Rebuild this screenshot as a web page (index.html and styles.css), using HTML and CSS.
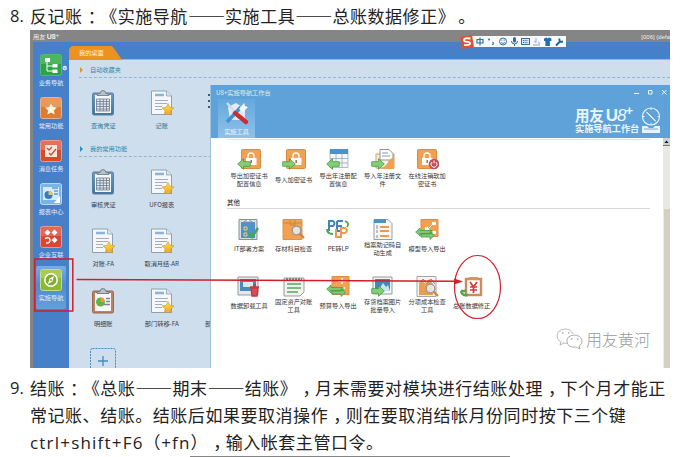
FILE: index.html
```html
<!DOCTYPE html>
<html lang="zh-CN">
<head>
<meta charset="utf-8">
<title>U8+ 结账</title>
<link rel="stylesheet" href="styles.css">
</head>
<body>
<svg class="defs" width="0" height="0" aria-hidden="true">
  <defs>
    <linearGradient id="gBlue" x1="0" y1="0" x2="0" y2="1"><stop offset="0" stop-color="#6f9dbb"/><stop offset="1" stop-color="#3f749e"/></linearGradient>
    <linearGradient id="gStar" x1="0" y1="0" x2="0" y2="1"><stop offset="0" stop-color="#ffe45a"/><stop offset="1" stop-color="#eda317"/></linearGradient>
  </defs>
  <symbol id="clip" viewBox="0 0 24 26">
    <rect x="1.500" y="3" width="21" height="22" rx="1.500" fill="url(#gBlue)" stroke="#587f9b"/>
    <path d="M4 5h16v18H4z" fill="#f4f7fa"/>
    <path d="M6 5.500V4l3-.5q.5-3 3-3t3 3l3 .5v1.500z" fill="#b9c1c9" stroke="#67737f" stroke-width=".8"/>
    <path d="M5.500 9h13v12h-13zM5.500 11.500h13M5.500 14h13M5.500 16.500h13M5.500 19h13M9 9v12M12.300 9v12M15.500 9v12" fill="#e5e9f0" stroke="#697889" stroke-width=".8"/>
  </symbol>
  <symbol id="doc" viewBox="0 0 24 26">
    <path d="M1.500 1h15l5 5v18.500h-20z" fill="#f4f7fb" stroke="#8797a8" stroke-width=".9"/>
    <path d="M16.500 1v5h5" fill="#dbe4ed" stroke="#8797a8" stroke-width=".7"/>
    <path d="M5 5h9" stroke="#8ab3dd" stroke-width="2.500"/>
    <path d="M5 10.500h13M5 13.500h12M5 16.500h7M5 19.500h7" stroke="#a5adb8" stroke-width="1.200"/>
    <path d="M18 13.500l1.800 3.800 4.200.6-3.100 2.900.8 4.200-3.700-2-3.700 2 .8-4.200-3.100-2.900 4.200-.6z" fill="url(#gStar)" stroke="#d49420" stroke-width=".6"/>
  </symbol>
  <symbol id="clipChart" viewBox="0 0 24 26">
    <rect x="1.500" y="3" width="21" height="22" rx="1.500" fill="#bd8260" stroke="#996a50"/>
    <path d="M4 5h16v18H4z" fill="#f6f8fa"/>
    <path d="M6 5.500V4l3-.5q.5-3 3-3t3 3l3 .5v1.500z" fill="#b9c1c9" stroke="#606a72" stroke-width=".8"/>
    <circle cx="9.500" cy="14" r="4.500" fill="#59b747"/><path d="M9.500 14V9.500a4.500 4.500 0 0 1 4.500 4.500z" fill="#ee9a3a"/>
    <path d="M15 10.500h4M15 13.500h4M13 16.500h6" stroke="#7d858e" stroke-width="1.300"/>
  </symbol>
  <symbol id="lock" viewBox="0 0 20 20">
    <rect x=".5" y=".5" width="19" height="19" rx="1" fill="#f2a052" stroke="#dc8a3c"/>
    <path d="M7 9V7a3 3 0 0 1 6 0v2" fill="none" stroke="#fff" stroke-width="1.400"/>
    <path d="M5 9h10.500v7H5z" fill="#fff"/><path d="M10.200 11v3" stroke="#96662f" stroke-width="1.400"/>
  </symbol>
  <symbol id="left" viewBox="0 0 14 12"><path d="M.7 6l5.800-5.300v3h6.800v4.600H6.500v3z" fill="#83cf77" stroke="#469c42" stroke-width=".8"/></symbol>
  <symbol id="right" viewBox="0 0 14 12"><path d="M13.300 6L7.500.7v3H.7v4.600h6.800v3z" fill="#83cf77" stroke="#469c42" stroke-width=".8"/></symbol>
  <symbol id="swap" viewBox="0 0 20 13"><path d="M.7 5L5 1v2.500h12v3H5V9zM19.300 8.500l-4.300-4V7H6v3h9v2.500z" fill="#81c875" stroke="#469a42" stroke-width=".8"/></symbol>
  <symbol id="lens" viewBox="0 0 14 14"><path d="M8.500 8.500l4.500 4.500" stroke="#d77d36" stroke-width="2.200"/><circle cx="5.500" cy="5.500" r="4.300" fill="#e8f2f8" fill-opacity=".8" stroke="#8f98a1" stroke-width="1.300"/></symbol>
</svg>

<ol class="steps" start="8">
  <li class="step">
    <span class="num">8.</span>
    <p class="txt">反记账<span class="mid">：</span>《实施导航<span class="dash">——</span>实施工具<span class="dash">——</span>总账数据修正》<span class="stop">。</span></p>
  </li>
</ol>

<div class="shot">
  <header class="topbar"><span class="brand">用友 <b>U8</b><sup>+</sup></span><span class="user">[006] (defa</span></header>
  <div class="desk">
    <nav class="side">
      <div class="nav"><svg class="nicon" viewBox="0 0 22 22"><rect x=".5" y=".5" width="21" height="21" rx="2" fill="#2da345" stroke="#55b970"/><path d="M1 1h20v9H1z" fill="#5fc36e" opacity=".6"/><path d="M5 4h5v4H5zM12.500 10h5v3.500h-5zM12.500 15.500h5V19h-5z" fill="#fff"/><path d="M7 8v9h6M7 12h6" fill="none" stroke="#fff"/></svg><span>业务导航</span></div>
      <div class="nav"><svg class="nicon" viewBox="0 0 22 22"><rect x=".5" y=".5" width="21" height="21" rx="2" fill="#dd7c33" stroke="#e9b287"/><path d="M1 1h20v9H1z" fill="#f1ae7a" opacity=".6"/><path d="M11 6.500l1.800 3.500 4 .6-2.900 2.800.7 4-3.600-2-3.600 2 .7-4-2.900-2.800 4-.6z" fill="#fff5dd"/></svg><span>常用功能</span></div>
      <div class="nav"><svg class="nicon" viewBox="0 0 22 22"><rect x=".5" y=".5" width="21" height="21" rx="2" fill="#d94a2d" stroke="#e99b88"/><path d="M1 1h20v9H1z" fill="#ef8b77" opacity=".6"/><path d="M5 5h12v12H5z" fill="#fce6de"/><path d="M7 8l2 2 3-3M9 13l2 2 5-6" fill="none" stroke="#cf4b34" stroke-width="1.300"/></svg><span>消息任务</span></div>
      <div class="nav"><svg class="nicon" viewBox="0 0 22 22"><rect x=".5" y=".5" width="21" height="21" rx="2" fill="#76b5e6" stroke="#b6daf1"/><path d="M3 4h16v13H3z" fill="#d5eafa"/><circle cx="8.500" cy="12" r="4" fill="#3779c6"/><path d="M8.500 12V8a4 4 0 0 1 4 4z" fill="#e7ca48"/><path d="M12 5h6M14 8h4M14 11h4" stroke="#5d9bd2" stroke-width="1.300"/><path d="M14 20l6-7v7z" fill="#fff"/></svg><span>报表中心</span></div>
      <div class="nav"><svg class="nicon" viewBox="0 0 22 22"><rect x=".5" y=".5" width="21" height="21" rx="2" fill="#dc4534" stroke="#ec998c"/><path d="M1 1h20v9H1z" fill="#ef8577" opacity=".5"/><path d="M7.500 3.500l3 3-3 3-3-3zM14.500 3.500l3 3-3 3-3-3zM14.500 11l3 3-3 3-3-3z" fill="#fff"/><path d="M5 12.500q5-2 5 1.500t-4 3" fill="none" stroke="#fff" stroke-width="1.500"/></svg><span>企业互联</span></div>
      <div class="nav on"><svg class="nicon" viewBox="0 0 22 22"><rect x=".5" y=".5" width="21" height="21" rx="2" fill="#8cb92d" stroke="#c5dc86"/><path d="M1 1h20v8H1z" fill="#bdd675" opacity=".6"/><circle cx="11" cy="11" r="6.200" fill="#82aa2e" stroke="#fff" stroke-width="1.500"/><path d="M14 7l-1.500 5.500L8 15l1.500-5.500z" fill="#fff"/><circle cx="11" cy="11" r="1" fill="#7da52f"/></svg><span>实施导航</span></div>
    </nav>
    <main class="main">
      <div class="tabs"><span class="tab">我的桌面</span></div>
      <div class="board">
        <h2 class="sec first">自动收藏夹</h2>
        <div class="row"><div class="app teal"><svg><use href="#clip"/></svg>查询凭证</div><div class="app teal"><svg><use href="#doc"/></svg>记账</div><div class="app"><svg viewBox="0 0 24 26"><path d="M0 5h2M0 11h2M0 17h2" stroke="#42586c" stroke-width="2"/></svg></div></div>
        <h2 class="sec">我的常用功能</h2>
        <div class="row"><div class="app"><svg><use href="#clip"/></svg>审核凭证</div><div class="app"><svg><use href="#doc"/></svg>UFO报表</div></div>
        <div class="row"><div class="app"><svg><use href="#doc"/></svg>对账-FA</div><div class="app"><svg><use href="#doc"/></svg>取消月结-AR</div></div>
        <div class="row"><div class="app"><svg><use href="#clipChart"/></svg>明细账</div><div class="app"><svg><use href="#doc"/></svg>部门转移-FA</div><div class="app cut">部</div></div>
        <div class="row"><div class="app"><svg class="add" viewBox="0 0 26 26"><rect x=".5" y=".5" width="25" height="25" rx="2" fill="none" stroke="#4b8ab9" stroke-dasharray="2 1"/><path d="M13 8v10M8 13h10" stroke="#438abf" stroke-width="1.300"/></svg></div></div>
      </div>
    </main>
  </div>

  <div class="ime">
    <svg viewBox="0 0 106 16">
      <path d="M12 2h94v11H12z" fill="#f7fafc"/>
      <path d="M0 3l12-2 2 12-12 2z" fill="#df5230"/>
      <path d="M10.500 4.500Q4 3.500 4 6.200q0 1.300 3.500 1.600 3.500.4 2.500 2.300-1 1.500-6 .8" fill="none" stroke="#fff" stroke-width="1.800"/>
      <path d="M17 5.500h6v3.500h-6zM20 3.500v8" fill="none" stroke="#32719c" stroke-width="1.200"/>
      <circle cx="29" cy="5.500" r="1" fill="#32719c"/><path d="M32.500 8.500q1.500 0 0 2.500" fill="none" stroke="#32719c" stroke-width="1.300"/>
      <circle cx="43" cy="7.500" r="3.500" fill="none" stroke="#32719c"/><path d="M41 8.500q2 2 4 0M41.800 5.500v1.200M44.200 5.500v1.200" fill="none" stroke="#32719c" stroke-width=".9"/>
      <rect x="53" y="3" width="3" height="5.500" rx="1.500" fill="#256da2"/><path d="M51.500 7q0 3 3 3t3-3M54.500 10v2" fill="none" stroke="#256da2"/>
      <rect x="61.500" y="4.500" width="8" height="6" fill="#d9e6ef" stroke="#32719c"/><path d="M63 6.500h5M63 8.500h5" stroke="#32719c" stroke-dasharray="1 .7"/>
      <path d="M76 4v4M74 7l2 1.500M73 11h7M78 8l2 2" fill="none" stroke="#b5c2cc" stroke-width="1.400"/>
      <path d="M84 4.500l2.500-1 1.200 1 1.200-1 2.500 1v2.500h-1.500v5h-4.500V7H84z" fill="#226eaa"/>
      <path d="M96 11.500l4-4M99.500 4.500q-1 4 3.500 3" fill="none" stroke="#255f91" stroke-width="1.900"/>
    </svg>
  </div>

  <section class="win">
    <header class="whead">
      <div class="wleft">
        <div class="wtitle">U8+实施导航工作台</div>
        <div class="wtab"><svg viewBox="0 0 24 24"><path d="M3 6l8-4 9 6v11H5z" fill="#e3eaf1"/><path d="M2 2l9 10" stroke="#d5dce5" stroke-width="2.500"/><path d="M2 21l14-15" stroke="#3f91d6" stroke-width="3.600"/><path d="M14 8l5-6 1 3 3 1-5 5z" fill="#f6fafc"/><path d="M10 12l11 9" stroke="#cb2d36" stroke-width="4.300" stroke-linecap="round"/></svg><span>实施工具</span></div>
      </div>
      <div class="wright">
        <svg class="ctl" viewBox="0 0 36 8"><path d="M1 5.500h5M15.500 2.500h3.500v3.500h-3.500zM29 2l4.500 4.500M33.500 2L29 6.500" fill="none" stroke="#eef7fc"/></svg>
        <div class="logo">
          <div><div class="l1">用友 <b>U<i>8</i></b><sup>+</sup></div><div class="l2">实施导航工作台</div></div>
          <svg viewBox="0 0 20 28"><circle cx="10" cy="10.500" r="8.500" fill="none" stroke="#e5f3fb" stroke-width="1.200"/><path d="M10 2v2M10 17v2M1.500 10.500h2M16.500 10.500h2M5.500 6L9 9l5.500 6-3.500-3z" stroke="#e5f3fb" fill="#e5f3fb"/><path d="M1 20h5l2 2h4l2-2h5v7H1z" fill="#e5f3fb"/><path d="M3 23h14" stroke="#6faeda"/></svg>
        </div>
      </div>
    </header>
    <div class="wbody">
      <div class="pane">
        <div class="tools r1">
          <div class="tool"><svg viewBox="0 0 24 21"><use href="#lock" x="4" width="20" height="20"/><use href="#left" y="9" width="14" height="12"/></svg><span>导出加密证书<br>配置信息</span></div>
          <div class="tool"><svg viewBox="0 0 24 21"><use href="#lock" x="4" width="20" height="20"/><use href="#right" y="9" width="14" height="12"/></svg><span>导入加密证书</span></div>
          <div class="tool"><svg viewBox="0 0 24 21"><path d="M4 .5h18v18H4zM4 9.500h18M4 14h18M10 5v13M16 5v13" fill="#f4f6f7" stroke="#9faab2" stroke-width=".8"/><path d="M4 0h18v5H4z" fill="#4b94cb"/><use href="#left" y="9" width="14" height="12"/></svg><span>导出年注册配<br>置信息</span></div>
          <div class="tool"><svg viewBox="0 0 24 21"><path d="M5 5h18v14H5z" fill="#f7f2e9" stroke="#d59961"/><path d="M9 .5h9l4 4V11H9z" fill="#fff" stroke="#89929a"/><path d="M11 4h6M11 7h8" stroke="#829bac"/><path d="M23 8v12H9q7-3 9-9z" fill="#f2a052"/><use href="#right" y="9" width="14" height="12"/></svg><span>导入年注册文<br>件</span></div>
          <div class="tool"><svg viewBox="0 0 24 21"><use href="#lock" x="2" width="20" height="20"/><circle cx="19" cy="15" r="5.300" fill="#c64c5a"/><path d="M17 13a3 3 0 1 0 4 0M19 11.500v3" fill="none" stroke="#fff"/></svg><span>在线注销软加<br>密证书</span></div>
        </div>
        <h3>其他</h3>
        <div class="tools r2">
          <div class="tool"><svg viewBox="0 0 24 21"><path d="M2 .5h18v20H2z" fill="#d5dee3" stroke="#879197"/><path d="M4 3h14v16H4z" fill="#4d92cc"/><path d="M7 3l4-3 4 3z" fill="#fff" stroke="#81909b"/><path d="M7 8h3v3H7zM7 14h3v3H7z" fill="none" stroke="#f4d264"/><path d="M11 14l4 4 6-9" fill="none" stroke="#48a651" stroke-width="2.600"/></svg><span>IT部署方案</span></div>
          <div class="tool"><svg viewBox="0 0 24 21"><path d="M1 .5h19v20H1z" fill="#f2a052" stroke="#de914d"/><path d="M1 4h19M8 1v5h5V1" fill="none" stroke="#ce843f"/><use href="#lens" x="9" y="6" width="14" height="14"/></svg><span>存材科目检查</span></div>
          <div class="tool"><svg viewBox="0 0 24 21"><path d="M3 12V2h4q3 2 0 5H3M11 2h6M11 7h5M11 2v10h3" fill="none" stroke="#3f86c0" stroke-width="2"/><path d="M10 10v8h4M15 19V9h4q4 2 0 5h-4" fill="none" stroke="#ee9b50" stroke-width="2"/><path d="M19 2q5 2 2 6M1 10q0 5 6 5" fill="none" stroke="#4ca64e" stroke-width="1.800"/></svg><span>PE转LP</span></div>
          <div class="tool"><svg viewBox="0 0 24 21"><path d="M3 .5h14l4 4v16H3z" fill="#f7f7f7" stroke="#989da1"/><path d="M3 0h12v4H3z" fill="#4e91c3"/><path d="M9 8h9M9 12h9M9 17h9" stroke="#e99a56" stroke-width="1.800"/><path d="M6 6v4M6 11v3M6 16v3" stroke="#888"/></svg><span>档案助记码自<br>动生成</span></div>
          <div class="tool"><svg viewBox="0 0 24 21"><path d="M6 .5h17v17H6z" fill="#f2a052" stroke="#d88e4a"/><path d="M10 8h3v4h-3zM17 3h4v3h-4zM17 12h4v3h-4z" fill="#fff"/><path d="M13 10l5-5M13 10l5 4" stroke="#fff"/><use href="#swap" y="8" width="20" height="13"/></svg><span>模型导入导出</span></div>
        </div>
        <div class="tools r3">
          <div class="tool"><svg viewBox="0 0 24 21"><path d="M1 1h20v18H1z" fill="#e4e9ec" stroke="#929ba1"/><path d="M3 3h16v12H3z" fill="#4a8ac2"/><path d="M6 6h10v5H6z" fill="#d9e8f2"/><path d="M13 11h9M16 9h3M14 12h7l-1 8h-5z" fill="#dd4c55" stroke="#c73540" stroke-width="1.300"/></svg><span>数据卸载工具</span></div>
          <div class="tool"><svg viewBox="0 0 24 21"><path d="M2 2h20v14l-4 4H2z" fill="#f2f2ee" stroke="#979d98"/><path d="M4 3h16" stroke="#788b91" stroke-width="2" stroke-dasharray="2 1"/><path d="M5 8h14M5 12h14M5 16h11" stroke="#5ba55d" stroke-width="1.700"/></svg><span>固定资产对账<br>工具</span></div>
          <div class="tool"><svg viewBox="0 0 24 21"><path d="M6 .5h17v18H6z" fill="#f2a052" stroke="#d88e4a"/><path d="M12 5h8M16 2v6M12 12h7" stroke="#fff" stroke-width="1.500"/><use href="#swap" y="8" width="20" height="13"/></svg><span>预算导入导出</span></div>
          <div class="tool"><svg viewBox="0 0 24 21"><path d="M2 1h19v17H2z" fill="#f3f6f8" stroke="#8f9ca5"/><path d="M4 3h15v12H4z" fill="#4586bf"/><path d="M7 15l5-8 3 4 2-2 2 6z" fill="#d0e4ef"/><use href="#right" y="9" width="14" height="12"/></svg><span>存货档案图片<br>批量导入</span></div>
          <div class="tool"><svg viewBox="0 0 24 21"><path d="M2 .5h19v20H2z" fill="#f5f5f3" stroke="#a4a6a7"/><path d="M4 19V9l3-4 4 3 3-5 4 5v11z" fill="#ef9b4f"/><path d="M4 8l4-5 4 5 4-5 4 5" fill="none" stroke="#d67c36"/><use href="#lens" x="10" y="7" width="14" height="14"/></svg><span>分项成本检查<br>工具</span></div>
          <div class="tool"><svg viewBox="0 0 24 21"><path d="M6 3h15v16H6z" fill="#fff" stroke="#cf8a59" stroke-width="2.400"/><path d="M9 4V1h9v3z" fill="#d89360"/><path d="M10 6l3.500 5L17 6M10 11h7M10 14h7M13.500 11v6" fill="none" stroke="#d63b3c" stroke-width="1.700"/><path d="M1 15q1 5 7 4M1 15h5" fill="none" stroke="#56a453" stroke-width="2.400"/></svg><span>总账数据修正</span></div>
        </div>
        <div class="mark"><svg viewBox="0 0 28 22"><path d="M17 6Q15 1 9 1 1 2 1 8q0 4 4 6l-1 3 4-2 3 .3" fill="#fff" stroke="#a8a8a8" stroke-width=".8"/><path d="M18 7q-8 1-7 7 1 6 9 5l4 2-1-3q4-2 3-6-2-5-8-5z" fill="#fff" stroke="#999" stroke-width=".8"/><path d="M6 5h1.500M12 5h1.500M15 11h1.500M21 11h1.500" stroke="#888" stroke-width="1.200"/></svg><span>用友黄河</span></div>
      </div>
      <div class="scroll"><div class="up"><svg viewBox="0 0 6 7"><path d="M3 2.500L5 5H1z" fill="#111"/></svg></div><div class="track"></div><div class="thumb"></div></div>
    </div>
  </section>

  <svg class="note" viewBox="0 0 640 338">
    <circle cx="34.800" cy="38" r="2.300" fill="#d7eafa"/><path d="M33.700 37.500l1.100 1.200 1.100-1.200" fill="none" stroke="#4580c9" stroke-width=".8"/>
    <g fill="none" stroke="#d01e2b" stroke-width="1.500"><rect x="4.800" y="229" width="38" height="52"/><path d="M46.500 249.500L426 251.300"/><ellipse cx="447.500" cy="257" rx="23" ry="31.500" stroke-width="1.200"/></g>
    <path d="M424 248.500l9 3-9 3z" fill="#e11924"/>
  </svg>
</div>

<ol class="steps after" start="9">
  <li class="step">
    <span class="num">9.</span>
    <p class="txt">结账<span class="mid">：</span>《总账<span class="dash">——</span>期末<span class="dash">——</span>结账》<span class="mid">，</span>月末需要对模块进行结账处理<span class="mid">，</span>下个月才能正<br>常记账、结账。结账后如果要取消操作<span class="mid">，</span>则在要取消结帐月份同时按下三个键<br><span class="latin">ctrl+shift+F6</span>（<span class="latin">+fn</span>）<span class="mid">，</span>输入帐套主管口令。</p>
  </li>
</ol>
<div class="next"></div>
</body>
</html>
```
FILE: styles.css
```css
* { box-sizing: border-box; }
html, body { margin: 0; height: 457px; overflow: hidden; background: #fff; }
body { font-family: "Noto Sans CJK SC", sans-serif; color: #222; }
.defs { display: block; position: absolute; }
h2, h3, p { margin: 0; font-weight: 400; }

.steps { list-style: none; margin: 0; padding: 2px 0 0 10px; height: 30px; }
.step { display: flex; font-size: 17px; line-height: 27px; letter-spacing: .54px; white-space: nowrap; text-spacing-trim: space-all; }
.num { width: 20px; font-family: "Open Sans", sans-serif; font-size: 16.5px; flex: none; letter-spacing: 0; }
.mid { margin-left: 5px; letter-spacing: -4.46px; }
.stop { margin-left: 3px; }
.dash { font-size: 18.6px; letter-spacing: 0; line-height: 0; }
.latin { font-family: "Open Sans", sans-serif; letter-spacing: 1.2px; }
.steps.after { padding-top: 6px; height: 88px; }
.next { width: 320px; height: 1px; margin-left: 190px; background: #858585; }

.shot { position: relative; width: 640px; height: 338px; margin-left: 30px; overflow: hidden; background: #858585; font-size: 6.2px; line-height: 8px; }
.topbar { height: 12px; display: flex; justify-content: space-between; align-items: center; color: #eee; padding: 1px 0 0 3px; white-space: nowrap; }
.brand b { font-family: "Liberation Sans", sans-serif; font-size: 7px; }
.brand sup { font: 6px/0 "Liberation Sans", sans-serif; vertical-align: 2px; }
.user { font-family: "Liberation Sans", sans-serif; font-size: 6px; }
.desk { display: flex; height: 326px; padding-left: 3px; }
.side { width: 36px; background: #4580c9; padding-top: 9px; flex: none; }
.nav { height: 43px; margin: 0 3px; padding-top: 3px; display: flex; flex-direction: column; align-items: center; gap: 3px; color: #e3effa; white-space: nowrap; }
.nicon { width: 22px; height: 22px; flex: none; }
.nav.on { background: linear-gradient(#78aee5, #4e8ad0 45%, #679edb); border-radius: 2px; }
.main { flex: 1; background: #cfdeec; min-width: 0; }
.tabs { height: 18px; background: #4580c9; padding-top: 4px; border-bottom: 1px solid #d5a884; }
.tab { display: block; width: 53px; height: 14px; padding-left: 10px; line-height: 13px; color: #fff3db; background: #eb9221; clip-path: polygon(0 3px, 3px 0, 43px 0, 47px 5px, 53px 100%, 0 100%); }
.board { padding-left: 5px; }
.sec { height: 13px; margin: 4px 0 0 5px; padding-left: 11px; color: #2787ad; font-size: 6.2px; line-height: 9px; position: relative; border-bottom: 1px dashed #8fb9d3; }
.sec.first { margin-top: 5px; color: #3689ad; }
.sec::before { content: ""; position: absolute; left: 1px; top: 1.500px; border-left: 3.500px solid #2390cf; border-top: 3px solid transparent; border-bottom: 3px solid transparent; }
.sec.first::before { border-left-color: #ef9029; }
.row { display: flex; height: 60px; padding-top: 11px; }
.sec + .row { padding-top: 12px; }
.sec.first + .row { height: 62px; padding-top: 12px; }
.app { width: 58.500px; display: flex; flex-direction: column; align-items: center; gap: 6px; color: #35414b; white-space: nowrap; }
.app svg { width: 24px; height: 26px; flex: none; }
.app .add { width: 26px; }
.app.teal { color: #2d738c; }
.app.cut { padding: 32px 0 0 14px; align-items: flex-start; }

.ime { position: absolute; left: 430px; top: 4px; width: 106px; height: 16px; }
.ime svg { display: block; width: 106px; height: 16px; }

.win { position: absolute; left: 180px; top: 55px; width: 460px; height: 283px; background: #fff; border-left: 1px solid #9ec4dd; display: flex; flex-direction: column; }
.whead { height: 53px; background: #5ea2d9; display: flex; justify-content: space-between; flex: none; }
.wtitle { height: 14px; padding: 4px 0 0 5px; color: #e0f0df; white-space: nowrap; }
.wtab { margin-left: 7px; width: 37px; height: 39px; display: flex; flex-direction: column; align-items: center; background: linear-gradient(#65a8dd, #8fc1e8); color: #e9f6fb; padding-top: 2px; }
.wtab svg { width: 24px; height: 24px; flex: none; margin-bottom: 3px; }
.wright { width: 97px; display: flex; flex-direction: column; }
.ctl { width: 36px; height: 8px; align-self: flex-end; margin: 3px 1px 0 0; }
.logo { display: flex; margin-top: 10px; gap: 1px; color: #e9f6fd; white-space: nowrap; }
.logo > div { width: 65px; margin-left: 2px; }
.logo svg { width: 20px; height: 28px; flex: none; }
.l1 { font-size: 14.500px; line-height: 18px; font-weight: 700; height: 17px; letter-spacing: -.2px; }
.l1 b { font-family: "Liberation Sans", sans-serif; font-size: 17px; font-weight: 700; letter-spacing: -1px; margin-left: -1px; }
.l1 i { font-weight: 400; }
.l1 sup { font: 700 13px/0 "Liberation Sans", sans-serif; vertical-align: 6px; }
.l2 { font-size: 9.200px; line-height: 10px; font-weight: 700; }
.wbody { flex: 1; display: flex; min-height: 0; }
.pane { flex: 1; padding: 1px 13px 0 16px; position: relative; }
.tools { display: flex; }
.r1 { height: 59px; border-top: 1px solid #e3e3e3; padding-top: 9px; }
.r2 { height: 57px; padding-top: 10px; }
.r3 { height: 50px; padding-top: 10px; }
.tool { width: 44.700px; flex: none; display: flex; flex-direction: column; align-items: center; color: #333; line-height: 7.500px; text-align: center; white-space: nowrap; margin-left: -.2px; }
.tool svg { width: 24px; height: 21px; flex: none; }
.tool span { height: 17px; display: flex; align-items: center; }
.r1 .tool span { margin-top: 1px; }
.pane h3 { height: 11px; font-size: 6.500px; line-height: 9px; border-bottom: 1px solid #d7d7d7; }
.mark { position: absolute; left: 345px; top: 190px; display: flex; align-items: center; gap: 2px; font-size: 16px; line-height: 22px; color: #999; font-weight: 300; white-space: nowrap; }
.mark svg { width: 28px; height: 22px; }
.scroll { width: 7px; background: #efede8; display: flex; flex-direction: column; }
.up { height: 8px; background: #d4d0c8; border-bottom: 1px solid #777; }
.up svg { display: block; width: 7px; height: 7px; }
.track { height: 63px; background: #eae8e3; }
.thumb { flex: 1; background: #d4d0c8; border-left: 1px solid #eeece6; }
.note { position: absolute; left: 0; top: 0; width: 640px; height: 338px; }
```
